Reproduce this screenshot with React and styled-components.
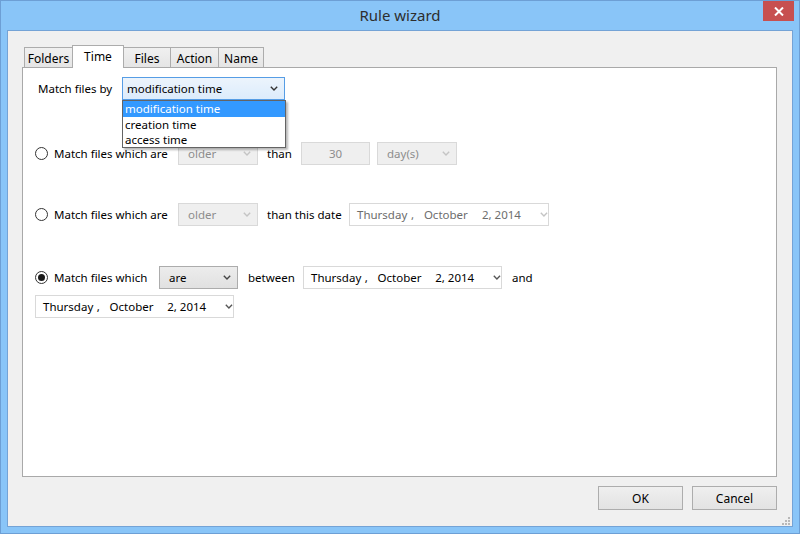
import React from 'react';
import styled, { createGlobalStyle, css } from 'styled-components';

const GlobalStyle = createGlobalStyle`
  html, body { margin: 0; padding: 0; }
  body {
    font-family: "Noto Sans", "Open Sans", "DejaVu Sans", sans-serif;
    font-size: 11.5px;
    color: #000;
  }
  * { box-sizing: border-box; }
`;

const Chevron = ({ color = '#444' }) => (
  <svg width="8" height="5" viewBox="0 0 8 5">
    <polyline points="0.8,0.8 4,4 7.2,0.8" fill="none" stroke={color} strokeWidth="1.4" />
  </svg>
);

const Grip = () => (
  <svg width="8" height="8" viewBox="0 0 8 8">
    {[[6, 0], [3, 3], [6, 3], [0, 6], [3, 6], [6, 6]].map(([x, y], i) => (
      <rect key={i} x={x} y={y} width="2" height="2" fill="#b8b8b8" />
    ))}
  </svg>
);

const App = () => {
  const tabs = [
    { label: 'Folders', w: 49 },
    { label: 'Time', w: 52, active: true },
    { label: 'Files', w: 48 },
    { label: 'Action', w: 49 },
    { label: 'Name', w: 46 },
  ];

  return (
    <>
      <GlobalStyle />
      <Window>
        <TitleBar>
          <span />
          <Title>Rule wizard</Title>
          <CloseButton>
            <svg width="10" height="9" viewBox="0 0 10 9">
              <path d="M1 0.5 L9 8.5 M9 0.5 L1 8.5" stroke="#fff" strokeWidth="2" />
            </svg>
          </CloseButton>
        </TitleBar>
        <Client>
          <TabStrip>
            {tabs.map((t) => (
              <Tab key={t.label} $w={t.w} $active={t.active}>{t.label}</Tab>
            ))}
          </TabStrip>
          <Panel>
            <Row $top={9} $left={15}>
              <Label $w={84}>Match files by</Label>
              <ComboWrap>
                <Combo $w={163} $variant="focus">
                  <span>modification time</span>
                  <Chevron color="#333" />
                </Combo>
                <DropList>
                  <DropItem $selected>modification time</DropItem>
                  <DropItem>creation time</DropItem>
                  <DropItem>access time</DropItem>
                </DropList>
              </ComboWrap>
            </Row>

            <Row $top={42}>
              <Radio />
              <Label $w={130} $pad={6}>Match files which are</Label>
              <Combo $w={80} $variant="disabled">
                <span>older</span>
                <Chevron color="#c4c4c4" />
              </Combo>
              <Label $w={43} $pad={9}>than</Label>
              <TextBox $w={69}>30</TextBox>
              <Combo $w={80} $variant="disabled" style={{ marginLeft: 7 }}>
                <span>day(s)</span>
                <Chevron color="#c4c4c4" />
              </Combo>
            </Row>

            <Row $top={38}>
              <Radio />
              <Label $w={130} $pad={6}>Match files which are</Label>
              <Combo $w={80} $variant="disabled">
                <span>older</span>
                <Chevron color="#c4c4c4" />
              </Combo>
              <Label $w={91} $pad={9}>than this date</Label>
              <DatePicker $w={200} disabled />
            </Row>

            <Row $top={40}>
              <Radio checked />
              <Label $w={111} $pad={6}>Match files which</Label>
              <Combo $w={79} $variant="normal">
                <span>are</span>
                <Chevron color="#444" />
              </Combo>
              <Label $w={65} $pad={10}>between</Label>
              <DatePicker $w={199} />
              <Label $pad={10}>and</Label>
            </Row>

            <Row $top={6}>
              <DatePicker $w={199} />
            </Row>
          </Panel>
          <ButtonRow>
            <Button>OK</Button>
            <Button>Cancel</Button>
          </ButtonRow>
          <GripCorner>
            <Grip />
          </GripCorner>
        </Client>
      </Window>
    </>
  );
};

export default App;

const Radio = ({ checked }) => (
  <RadioCircle>{checked && <RadioDot />}</RadioCircle>
);

const DatePicker = ({ $w, disabled }) => (
  <DateBox $w={$w} $disabled={disabled}>
    <DatePart $w={55}>Thursday</DatePart>
    <DatePart $w={13}>,</DatePart>
    <DatePart $w={59}>October</DatePart>
    <DatePart $w={48}>2, 2014</DatePart>
    <Chevron color={disabled ? '#c4c4c4' : '#555'} />
  </DateBox>
);

const Window = styled.div`
  width: 800px;
  height: 534px;
  background: #89c5f8;
  border: 1px solid #6d9fd5;
  display: flex;
  flex-direction: column;
`;

const TitleBar = styled.div`
  height: 29px;
  display: grid;
  grid-template-columns: 1fr auto 1fr;
  align-items: start;
`;

const Title = styled.div`
  font-family: "Noto Sans", "Open Sans", sans-serif;
  font-size: 15px;
  color: #2e2e2e;
  line-height: 28px;
`;

const CloseButton = styled.div`
  justify-self: end;
  margin-right: 5px;
  width: 31px;
  height: 20px;
  background: #c75050;
  display: flex;
  align-items: center;
  justify-content: center;
`;

const Client = styled.div`
  flex: 1;
  margin: 0 6px 6px 6px;
  background: #f0f0f0;
  border: 1px solid #74a3d6;
  padding: 14px 15px 16px 14px;
  display: flex;
  flex-direction: column;
  position: relative;
`;

const TabStrip = styled.div`
  height: 22px;
  display: flex;
  align-items: flex-end;
  padding-left: 2px;
  position: relative;
  z-index: 2;
`;

const Tab = styled.div`
  width: ${(p) => p.$w}px;
  height: 20px;
  margin-left: -1px;
  &:first-child { margin-left: 0; }
  border: 1px solid #acacac;
  border-bottom: none;
  background: linear-gradient(#f0f0f0, #e5e5e5);
  display: flex;
  align-items: center;
  justify-content: center;
  font-size: 12px;
  padding-top: 1px;
  ${(p) => p.$active && css`
    height: 23px;
    margin-bottom: -1px;
    background: #fff;
    position: relative;
    z-index: 1;
    align-items: flex-start;
    padding-top: 2px;
  `}
`;

const Panel = styled.div`
  flex: 1;
  background: #fff;
  border: 1px solid #a9a9a9;
  display: flex;
  flex-direction: column;
  position: relative;
`;

const Row = styled.div`
  display: flex;
  align-items: center;
  height: 23px;
  margin-top: ${(p) => p.$top}px;
  padding-left: ${(p) => p.$left ?? 12}px;
`;

const Label = styled.div`
  ${(p) => p.$w && css`width: ${p.$w}px;`}
  padding-left: ${(p) => p.$pad ?? 0}px;
  flex-shrink: 0;
  white-space: nowrap;
`;

const RadioCircle = styled.div`
  width: 13px;
  height: 13px;
  border-radius: 50%;
  border: 1px solid #333;
  background: #fff;
  display: flex;
  align-items: center;
  justify-content: center;
  flex-shrink: 0;
`;

const RadioDot = styled.div`
  width: 7px;
  height: 7px;
  border-radius: 50%;
  background: #1a1a1a;
`;

const comboVariants = {
  focus: css`
    background: linear-gradient(#ecf4fc, #dcecfc);
    border-color: #569de5;
    color: #000;
  `,
  normal: css`
    background: linear-gradient(#ececec, #e1e1e1);
    border-color: #acacac;
    color: #000;
  `,
  disabled: css`
    background: #efefef;
    border-color: #d9d9d9;
    color: #8d8d8d;
  `,
};

const ComboWrap = styled.div`
  position: relative;
`;

const Combo = styled.div`
  width: ${(p) => p.$w}px;
  height: 23px;
  border: 1px solid;
  display: flex;
  align-items: center;
  justify-content: space-between;
  padding: 0 6px 0 4px;
  flex-shrink: 0;
  ${(p) => comboVariants[p.$variant]}
  span { padding-left: ${(p) => (p.$variant === 'focus' ? 0 : 5)}px; }
`;

const DropList = styled.div`
  position: absolute;
  left: 0;
  top: 23px;
  width: 164px;
  background: #fff;
  border: 1px solid #646464;
  box-shadow: 2px 2px 2px rgba(0, 0, 0, 0.28);
  z-index: 5;
`;

const DropItem = styled.div`
  height: 15px;
  line-height: 15px;
  padding-left: 2px;
  ${(p) => p.$selected && css`
    background: #3399ff;
    color: #fff;
    height: 16px;
    line-height: 16px;
  `}
`;

const TextBox = styled.div`
  width: ${(p) => p.$w}px;
  height: 23px;
  border: 1px solid #d9d9d9;
  background: #efefef;
  color: #8d8d8d;
  display: flex;
  align-items: center;
  justify-content: center;
  flex-shrink: 0;
`;

const DateBox = styled.div`
  width: ${(p) => p.$w}px;
  height: 23px;
  border: 1px solid #d9d9d9;
  background: #fff;
  color: ${(p) => (p.$disabled ? '#6d6d6d' : '#000')};
  display: flex;
  align-items: center;
  padding-left: 7px;
  flex-shrink: 0;
  svg { margin-left: 11px; }
`;

const DatePart = styled.span`
  width: ${(p) => p.$w}px;
  white-space: nowrap;
`;

const ButtonRow = styled.div`
  display: flex;
  justify-content: flex-end;
  gap: 9px;
  margin-top: 9px;
`;

const Button = styled.div`
  width: 85px;
  height: 24px;
  border: 1px solid #adadad;
  background: linear-gradient(#efefef, #e3e3e3);
  display: flex;
  align-items: center;
  justify-content: center;
  font-size: 12px;
`;

const GripCorner = styled.div`
  position: absolute;
  right: 2px;
  bottom: 1px;
  line-height: 0;
`;
